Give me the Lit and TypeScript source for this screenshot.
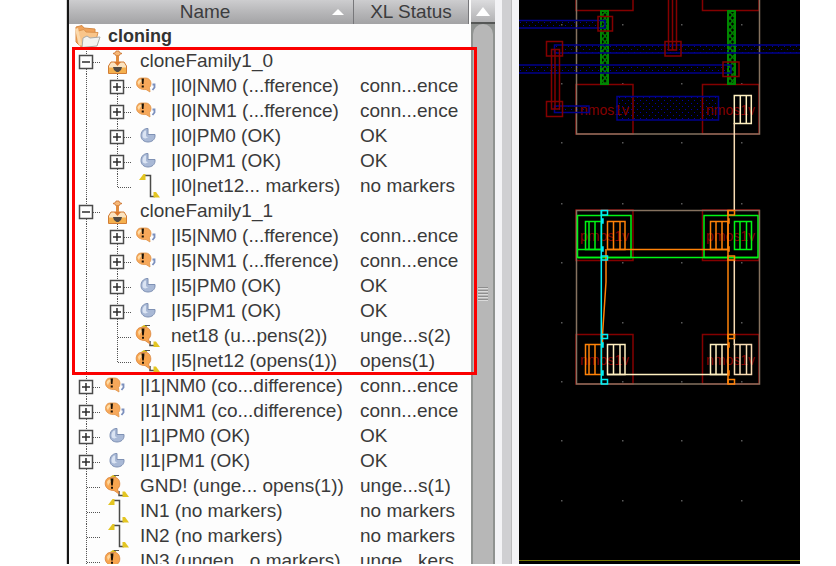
import { LitElement, html, css, svg, nothing } from "lit";
import { customElement, property } from "lit/decorators.js";

type Kind = "family" | "warn" | "ok" | "net" | "open";
interface Row {
  level: 1 | 2;
  toggle?: "open" | "closed";
  kind: Kind;
  name: string;
  status: string;
  last?: boolean;
}

const inst = (level: 1 | 2, kind: Kind, name: string, status: string): Row => ({
  level, kind, name, status, toggle: "closed",
});

const rows: Row[] = [
  { level: 1, toggle: "open", kind: "family", name: "cloneFamily1_0", status: "" },
  inst(2, "warn", "|I0|NM0 (...fference)", "conn...ence"),
  inst(2, "warn", "|I0|NM1 (...fference)", "conn...ence"),
  inst(2, "ok", "|I0|PM0 (OK)", "OK"),
  inst(2, "ok", "|I0|PM1 (OK)", "OK"),
  { level: 2, kind: "net", name: "|I0|net12... markers)", status: "no markers", last: true },
  { level: 1, toggle: "open", kind: "family", name: "cloneFamily1_1", status: "" },
  inst(2, "warn", "|I5|NM0 (...fference)", "conn...ence"),
  inst(2, "warn", "|I5|NM1 (...fference)", "conn...ence"),
  inst(2, "ok", "|I5|PM0 (OK)", "OK"),
  inst(2, "ok", "|I5|PM1 (OK)", "OK"),
  { level: 2, kind: "open", name: "net18 (u...pens(2))", status: "unge...s(2)" },
  { level: 2, kind: "open", name: "|I5|net12 (opens(1))", status: "opens(1)", last: true },
  inst(1, "warn", "|I1|NM0 (co...difference)", "conn...ence"),
  inst(1, "warn", "|I1|NM1 (co...difference)", "conn...ence"),
  inst(1, "ok", "|I1|PM0 (OK)", "OK"),
  inst(1, "ok", "|I1|PM1 (OK)", "OK"),
  { level: 1, kind: "open", name: "GND! (unge... opens(1))", status: "unge...s(1)" },
  { level: 1, kind: "net", name: "IN1 (no markers)", status: "no markers" },
  { level: 1, kind: "net", name: "IN2 (no markers)", status: "no markers" },
  { level: 1, kind: "open", name: "IN3 (ungen...o markers)", status: "unge...kers" },
];

const icons = {
  family: svg`
    <path d="M11 4.500L13.500 3.500L14 2H17L17.500 3.500L20 4.500L17.500 5.500L17 7H14L13.500 5.500Z" fill="#f6b878" stroke="#c9702c" stroke-width="0.8" />
    <path d="M9 13L6.500 17V24.500H24.500V17L22 13Z" fill="#fbe3c0" stroke="#d27d35" />
    <path d="M7 18.500H24V24H7Z" fill="#f4b04e" />
    <path d="M15.500 6V14" stroke="#e08a3c" stroke-width="3" />
    <path d="M12 13H19L15.500 17Z" fill="#d9762b" />
    <path d="M11 18H20L19 21L16.500 23H14.500L12 21Z" fill="#4f4a45" />`,
  warn: svg`
    <path d="M8 4H13C15 4 18 6 18 9C18 11 17.500 12.500 16.500 13.500L17 18L13 15.500C8 16 3.500 13.500 3.500 9.500C3.500 6.500 5 4 8 4Z"
      fill="#f7a85a" stroke="#e0944a" stroke-width="0.8" />
    <path d="M4.500 8.500C5.500 6 8 4.800 11.500 5.500C8.500 7 6.500 8.500 6 11.500Z" fill="#ffdca5" />
    <path d="M8.500 4.500H11L10.500 10H9Z M8.700 11.500H10.800V13.500H8.700Z" fill="#1c1206" />
    <path d="M19.500 10.500H21.500V13.500L19.500 16" fill="none" stroke="#7b8fbd" stroke-width="1.800" />`,
  ok: svg`
    <path d="M14 4.500C10 5 8 8 8 11.500C8 15.500 11 18 15 18C19 18 22 15.500 22 12V10.500H15V4.500Z"
      fill="#a9b9d6" stroke="#7f91b4" />
    <path d="M9.500 11.500C9.500 8.500 11 6.500 13 6.500V11.500C13 12.500 14 13 15.500 13L12.500 14.500C10.500 14.500 9.500 13.500 9.500 11.500Z" fill="#dbe4f3" />`,
  net: svg`
    <path d="M11 1.500H17.500V22.500H22" fill="none" stroke="#4b4b48" stroke-width="1.500" />
    <path d="M6 6L10.500 0H12.500V6Z" fill="#e3c522" />
    <path d="M20.500 18H23L27 23.500H20.500Z" fill="#e3c522" />`,
  open: svg`
    <path d="M8 3L11 1H14V3Z" fill="#d8bb24" />
    <path d="M12 1.500H17" stroke="#555" />
    <path d="M17 17V21.500H22" fill="none" stroke="#4b4b48" stroke-width="1.500" />
    <path d="M8 3.500H13C15.500 3.500 17.800 6 17.800 10C17.800 12.500 16.500 14 15.500 15L17 20L12 16.500C7 16.500 3.200 14 3.200 9.500C3.200 6.500 5 3.500 8 3.500Z"
      fill="#f7a54f" stroke="#d98238" stroke-width="0.8" />
    <path d="M5 8C6 5.500 9 4.500 12 5.500C9 7 7 9 6 12Z" fill="#ffd59a" />
    <path d="M8.500 4.500H11.500L10.800 11.500H9.200Z M9 12.700H11V14.700H9Z" fill="#1c1206" />
    <path d="M20.500 17.500H23L27 23H20.500Z" fill="#e3c522" />`,
};

@customElement("clone-tree")
export class CloneTree extends LitElement {
  @property({ attribute: false }) rows: Row[] = [];

  static styles = css`
    :host { display: block; color: #3a3a3a; font: 19px/23px "Liberation Sans", Arial, sans-serif; }
    .tree { width: 100%; border-collapse: collapse; table-layout: fixed; }
    th, td { padding: 0; height: 25px; font-weight: 400; text-align: left; vertical-align: top; white-space: nowrap; }
    .status-col { width: 115px; }
    .head th { height: 24px; background: linear-gradient(#cdcdcf, #b9b9bb 45%, #a3a3a5); }
    .sort {
      display: flex; align-items: center; box-sizing: border-box; width: 100%; height: 24px; padding: 0 9px;
      border: 0; border-right: 1px solid #77777a; background: none; color: #3c3c3e;
      font: 19px/22px "Liberation Sans", Arial, sans-serif; justify-content: center;
    }
    .sort .label { flex: 1; text-align: center; }
    .sort svg { display: block; }
    .root { display: flex; align-items: center; gap: 7px; height: 25px; padding-left: 5px; font-size: 18px; font-weight: 700; color: #333; }
    .cell { display: flex; height: 25px; padding-left: 2px; }
    .cell svg { display: block; flex: none; }
    .toggle { flex: none; display: block; padding: 0; border: 0; background: none; }
    .tree .value { padding-left: 6px; }
  `;

  private guide(row: Row) {
    const bottom = row.last ? 13 : 25;
    const art = svg`
      <path d="M15.500 0V${bottom} M16 13.500H30" stroke="#555" stroke-dasharray="1 1" fill="none" shape-rendering="crispEdges" />
      ${row.toggle
        ? svg`<rect x="8.500" y="6.500" width="13" height="13" fill="#fdfdfd" stroke="#4a4a4a" stroke-width="1.500" />
              <path d="M11 13H19 ${row.toggle === "closed" ? "M15 9V17" : ""}" stroke="#2c2c2c" stroke-width="1.500" />`
        : nothing}`;
    const picture = html`<svg width="31" height="25" aria-hidden="true">${art}</svg>`;
    return row.toggle
      ? html`<button class="toggle" aria-label=${row.name} aria-expanded=${row.toggle === "open"}>${picture}</button>`
      : picture;
  }

  render() {
    return html`
      <table class="tree">
        <colgroup><col /><col class="status-col" /></colgroup>
        <thead class="head">
          <tr>
            <th scope="col"><button class="sort"><span class="label">Name</span>
              <svg width="12" height="7" aria-hidden="true"><path d="M6 0L12 6H0Z" fill="#fff" /></svg></button></th>
            <th scope="col"><button class="sort">XL Status</button></th>
          </tr>
        </thead>
        <tbody>
          <tr>
            <td colspan="2"><div class="root">
              <svg width="27" height="25" aria-hidden="true">
                <path d="M2 3L8 1.500L10 4L21 5V17L6 22L2 18Z" fill="#f0a35a" stroke="#d58a45" />
                <path d="M4 7L10 5.500L12 8L24 8.500L21 20L7 23Z" fill="#f9c58a" stroke="#dd9550" />
                <path d="M1 5L4 4L8 21L5 22Z" fill="#fbd9ac" />
                <path d="M9 14L13 12L16 14L26 13L23 22L8 23.500Z" fill="#f3f3f1" stroke="#aaa9a5" />
              </svg>cloning</div></td>
          </tr>
          ${this.rows.map((row) => html`
            <tr>
              <td><div class="cell">
                ${row.level === 2
                  ? html`<svg width="31" height="25" aria-hidden="true"><path d="M15.500 0V25" stroke="#555" stroke-dasharray="1 1" shape-rendering="crispEdges" /></svg>`
                  : nothing}
                ${this.guide(row)}
                <svg width="38" height="25" aria-hidden="true">${icons[row.kind]}</svg>
                <span>${row.name}</span>
              </div></td>
              <td class="value">${row.status}</td>
            </tr>`)}
        </tbody>
      </table>`;
  }
}

const box = (x1: number, y1: number, x2: number, y2: number, cls: string) =>
  svg`<rect class=${cls} x=${x1} y=${y1} width=${x2 - x1} height=${y2 - y1} />`;

// A transistor symbol: a frame with two inner bars.
const ladder = (x: number, y: number, w: number, h: number, a: number, b: number, cls: string) =>
  svg`<path class=${cls} d="M${x} ${y}h${w}v${h}h${-w}z M${x + a} ${y}v${h} M${x + b} ${y}v${h}" />`;

const gridX = [562, 623, 682, 742];
const gridY = [25, 84, 143, 204, 263, 323, 382, 441, 501];

@customElement("layout-canvas")
export class LayoutCanvas extends LitElement {
  static styles = css`
    :host { display: block; overflow: hidden; background: #000; }
    svg { display: block; width: 100%; }
    rect, path { fill: none; }
    .brown { stroke: #85725f; stroke-width: 1.5; }
    .red { stroke: #840000; stroke-width: 1.5; }
    .blue { stroke: #00008c; stroke-width: 1.5; fill: url(#blue-dots); }
    .via { stroke: #008600; stroke-width: 2; fill: url(#green-cross); }
    .green { stroke: #00f514; stroke-width: 1.5; }
    .orange { stroke: #ff8208; stroke-width: 1.5; }
    .cyan { stroke: #00f0f5; stroke-width: 1.5; }
    .cream { stroke: #fff0c0; stroke-width: 1.5; }
    .peach { stroke: #f8dcb4; stroke-width: 1.5; }
    .ruler { stroke: #757500; }
    .dot { fill: #585858; }
    .name { fill: #840000; font: 14px "Liberation Sans", Arial, sans-serif; }
  `;

  render() {
    return html`
      <svg viewBox="519 0 281 564" role="img" aria-label="Layout view">
        <defs>
          <pattern id="blue-dots" width="6" height="6" patternUnits="userSpaceOnUse">
            <path d="M1 1h1v1h-1z M4 4h1v1h-1z" style="fill:#0000a8" />
          </pattern>
          <pattern id="green-cross" width="5" height="6" patternUnits="userSpaceOnUse">
            <path d="M0 0L5 6M5 0L0 6" style="stroke:#007c00;stroke-width:1.5" />
          </pattern>
        </defs>
        ${gridY.map((y) => gridX.map((x) => svg`<rect class="dot" x=${x - 1} y=${y - 1} width="1.500" height="1.500" />`))}

        ${box(576, -5, 633, 10.5, "red")} ${box(702.5, -5, 759, 10.5, "red")}
        ${box(576, 84.5, 633, 134, "red")} ${box(702.5, 84.5, 759, 134, "red")}
        ${box(576.5, -5, 759.5, 134, "brown")}
        <text class="name" x="580" y="115">nmos1v</text>
        <text class="name" x="706" y="115">nmos1v</text>
        ${box(601, 11, 608, 84, "via")} ${box(728, 11, 735, 84, "via")}
        ${box(510, 20.5, 605, 28, "blue")} ${box(554.5, 45, 810, 53, "blue")}
        ${box(510, 65, 731, 73, "blue")} ${box(554.5, 106, 589, 112.5, "blue")}
        ${box(617, 96.5, 718.5, 120, "blue")}
        ${box(598, 16.5, 612.5, 31, "red")} ${box(546.5, 41.5, 562.5, 56, "red")}
        ${box(546.5, 101.5, 562.5, 116.5, "red")} ${box(665, 41.5, 681, 56, "red")}
        ${box(723, 62, 739, 76.5, "red")}
        <path class="red" d="M551.500 49.500H559.500V109H551.500Z M555 49.500V109" />
        <path class="red" d="M668.500 0V50H676.500V0 M672.500 0V50" />
        ${ladder(734.3, 95.5, 17, 28, 6, 12, "cream")}

        ${box(576, 210, 633, 260.5, "red")} ${box(702.5, 210, 759, 260.5, "red")}
        ${box(576, 334.5, 633, 384, "red")} ${box(702.5, 334.5, 759, 384, "red")}
        ${box(576.5, 210.5, 759.5, 384, "brown")}
        <text class="name" x="580" y="241">pmos1v</text>
        <text class="name" x="706" y="241">pmos1v</text>
        <text class="name" x="580" y="365">nmos1v</text>
        <text class="name" x="706" y="365">nmos1v</text>
        ${box(577.5, 215.5, 631, 257.5, "green")} ${box(704, 215.5, 758, 257.5, "green")}
        <path class="green" d="M578 257.500H758 M578 249.500H602" />
        ${ladder(585.5, 221.5, 16, 28, 3.5, 9.5, "green")}
        ${ladder(734.5, 221.5, 17, 28, 5.5, 12, "green")}
        <path class="peach" d="M734.300 123V210 M734.300 260V345" />
        ${ladder(607.5, 221.5, 17.5, 28, 6, 12.5, "orange")}
        ${ladder(710.5, 221.5, 17.5, 28, 5.5, 11.5, "orange")}
        <path class="orange" d="M607 249.500H728 M606 249V282L602.500 335V345" />
        ${ladder(585.5, 344.5, 16, 30, 3.5, 9.5, "orange")}
        ${ladder(607.5, 344.5, 17.5, 30, 6, 12.5, "cream")}
        ${ladder(710.5, 344.5, 17.5, 30, 5.5, 11.5, "cream")}
        ${ladder(734.5, 344.5, 17, 30, 5.5, 12, "peach")}
        <path class="cream" d="M607 374.500H728" />
        <path class="cyan" d="M601.300 210V384 M602 219h1v4h-1z M602 247h1v4h-1z M602 343h1v4h-1z M602 371h1v4h-1z" />
        ${box(601.5, 210.5, 607.5, 215, "cyan")} ${box(601.5, 256, 607.5, 260, "cyan")}
        ${box(601.5, 334.5, 607.5, 338.5, "cyan")} ${box(601.5, 379.5, 607.5, 384, "cyan")}
        <path class="orange" d="M728 210V384 M728 219h1v4h-1z M728 247h1v4h-1z M728 343h1v4h-1z M728 371h1v4h-1z" />
        ${box(728, 210.5, 734.5, 215, "orange")} ${box(728, 256, 734.5, 260, "orange")}
        ${box(728, 334.5, 734.5, 338.5, "orange")} ${box(728, 379.5, 734.5, 384, "orange")}
        <path class="ruler" d="M519 560.500H800" />
      </svg>`;
  }
}

@customElement("app-root")
export class AppRoot extends LitElement {
  static styles = css`
    :host { display: block; height: 100vh; overflow: hidden; box-sizing: border-box; padding: 0 36px 2px 66px; background: #fff; }
    .window { display: flex; height: 100%; overflow: hidden; }
    .panel { position: relative; flex: none; width: 429px; display: flex; border-left: 1px solid #d5d5d5; box-sizing: border-box; }
    .list { flex: 1; min-width: 0; border-left: 2px solid #151515; background: #fdfdfd; padding-right: 2px; }
    .highlight {
      position: absolute; left: 5px; right: 18px; top: 47px; height: 328px; box-sizing: border-box;
      border: 3px solid #fb0000; pointer-events: none;
    }
    .scroll { flex: none; width: 24px; display: flex; flex-direction: column; background: #8f9290; }
    .up {
      flex: none; height: 24px; padding: 0; border: 0; border-bottom: 2px solid #555756;
      background: linear-gradient(#dcdcde, #b2b2b4); display: grid; place-items: center;
    }
    .up svg { display: block; }
    .thumb {
      flex: 1; margin: 0 2px; border-radius: 10px 10px 0 0; background: #b7b7b7;
      display: grid; place-items: center;
    }
    .grip { width: 10px; height: 15px; background: repeating-linear-gradient(#8e8e8e 0 1px, #dadada 1px 2px, #b7b7b7 2px 3px); }
    .splitter { flex: none; width: 24px; display: flex; background: #f3f3f6; }
    .rail { width: 9px; margin-left: 7px; background: #cfcfd2; border-right: 1px solid #b9b9bb; }
    .canvas { flex: 1; min-width: 0; }
  `;

  render() {
    return html`
      <main class="window">
        <section class="panel">
          <clone-tree class="list" .rows=${rows}></clone-tree>
          <div class="scroll">
            <button class="up" aria-label="Scroll up">
              <svg width="14" height="9" aria-hidden="true"><path d="M7 0L14 9H0Z" fill="#fff" /></svg>
            </button>
            <div class="thumb"><div class="grip"></div></div>
          </div>
          <div class="highlight"></div>
        </section>
        <div class="splitter"><div class="rail"></div></div>
        <layout-canvas class="canvas"></layout-canvas>
      </main>`;
  }
}
